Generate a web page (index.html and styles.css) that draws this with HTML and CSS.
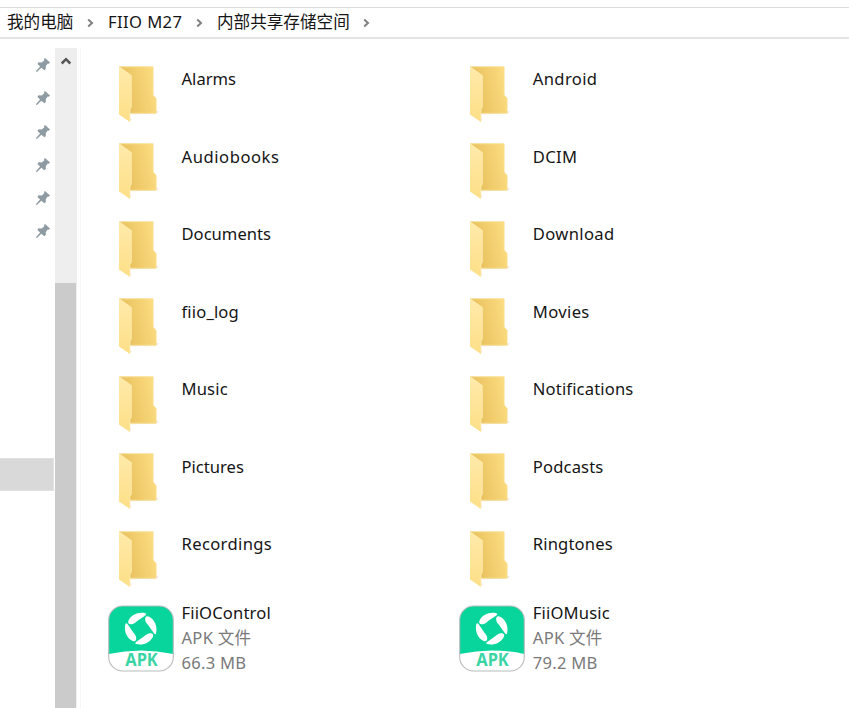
FILE: index.html
```
<!DOCTYPE html>
<html lang="zh-CN">
<head>
<meta charset="utf-8">
<title>内部共享存储空间</title>
<link rel="stylesheet" href="styles.css">
</head>
<body>
<svg class="defs" aria-hidden="true">
  <defs>
    <linearGradient id="back" x1="0.2" y1="0.7" x2="1" y2="0.5"><stop offset="0" stop-color="#e9c15e"/><stop offset="1" stop-color="#fbdc80"/></linearGradient>
    <linearGradient id="flap" x1="0" y1="0" x2="0" y2="1"><stop offset="0" stop-color="#ffeaaa"/><stop offset="1" stop-color="#fddf87"/></linearGradient>
    <symbol id="folder" viewBox="0 0 66 66">
      <path d="M20 54 49 53 51 51 48 50ZM20 61.5 24 59 22 57Z" fill="#ededed"/>
      <path d="M11 6H45.3V34.5L48.3 38V53H18Z" fill="url(#back)"/>
      <path d="M11.3 6.4H45V34.7L48 38V52.6H24" fill="none" stroke="#fae093" stroke-width=".7"/>
      <path d="M11 6 23.4 15V46.5L22 49V61.6L11 54Z" fill="url(#flap)"/>
      <path d="M11.5 6.5 23.3 15V46.5L22 49V61" fill="none" stroke="#ffefb9" stroke-width=".7"/>
    </symbol>
    <symbol id="pin" viewBox="0 0 14 14">
      <path d="M9 0 14 4.5 12.8 5.8 11.8 5.6 9.8 8 9.8 11 8.4 12.2 5.3 9.7 1.2 13.7 0 14 .3 12.7 4.1 8.5 1.4 6 2.6 4.3 5.7 4.4 8.4 2.2 8 1.1Z"/>
    </symbol>
    <symbol id="chevron" viewBox="0 0 8 10">
      <path d="M2.2 1.6 6 5 2.2 8.4" fill="none" stroke="#808080" stroke-width="2"/>
    </symbol>
    <symbol id="apk" viewBox="0 0 66 67">
      <rect x=".7" y="1" width="64.6" height="65" rx="14" fill="#fff"/>
      <path d="M.7 49V15A14 14 0 0 1 14.7 1H51.3A14 14 0 0 1 65.3 15V49Q33 42 .7 49Z" fill="#08d59b"/>
      <rect x=".7" y="1" width="64.6" height="65" rx="14" fill="none" stroke="#b9bdbb" stroke-width="1.1"/>
      <g transform="translate(32.7 23.7)" fill="#fff">
        <path id="blade" d="M4.5-15.4C-2.5-17-9-14-12-8.5C-13.5-5.5-11.5-4.2-9-4.5C-6.5-4.8-5-6.2-3.5-7.6L4.6-13.2Q6.4-14.8 4.5-15.4Z"/>
        <use href="#blade" transform="rotate(90)"/>
        <use href="#blade" transform="rotate(180)"/>
        <use href="#blade" transform="rotate(270)"/>
      </g>
      <text class="apk-label" x="33.5" y="61" text-anchor="middle" textLength="32.5" lengthAdjust="spacingAndGlyphs">APK</text>
    </symbol>
  </defs>
</svg>
<header class="address">
  <span class="crumb root">我的电脑</span><svg class="sep"><use href="#chevron"/></svg>
  <span class="crumb device">FIIO M27</span><svg class="sep"><use href="#chevron"/></svg>
  <span class="crumb storage">内部共享存储空间</span><svg class="sep"><use href="#chevron"/></svg>
</header>
<div class="body">
  <nav class="sidebar">
    <div class="pins">
      <svg class="pin"><use href="#pin"/></svg>
      <svg class="pin"><use href="#pin"/></svg>
      <svg class="pin"><use href="#pin"/></svg>
      <svg class="pin"><use href="#pin"/></svg>
      <svg class="pin"><use href="#pin"/></svg>
      <svg class="pin"><use href="#pin"/></svg>
    </div>
    <div class="selected"></div>
  </nav>
  <div class="scrollbar">
    <svg class="up" viewBox="0 0 12 10"><path d="M1.7 7.5 6 3.2 10.3 7.5" fill="none" stroke="#555" stroke-width="2.5"/></svg>
    <div class="thumb"></div>
  </div>
  <main class="files">
    <div class="item"><svg class="icon"><use href="#folder"/></svg><span class="name">Alarms</span></div>
    <div class="item"><svg class="icon"><use href="#folder"/></svg><span class="name wide">Android</span></div>
    <div class="item"><svg class="icon"><use href="#folder"/></svg><span class="name wider">Audiobooks</span></div>
    <div class="item"><svg class="icon"><use href="#folder"/></svg><span class="name wide">DCIM</span></div>
    <div class="item"><svg class="icon"><use href="#folder"/></svg><span class="name">Documents</span></div>
    <div class="item"><svg class="icon"><use href="#folder"/></svg><span class="name wide">Download</span></div>
    <div class="item"><svg class="icon"><use href="#folder"/></svg><span class="name slight">fiio_log</span></div>
    <div class="item"><svg class="icon"><use href="#folder"/></svg><span class="name wide">Movies</span></div>
    <div class="item"><svg class="icon"><use href="#folder"/></svg><span class="name slight">Music</span></div>
    <div class="item"><svg class="icon"><use href="#folder"/></svg><span class="name slight">Notifications</span></div>
    <div class="item"><svg class="icon"><use href="#folder"/></svg><span class="name">Pictures</span></div>
    <div class="item"><svg class="icon"><use href="#folder"/></svg><span class="name slight">Podcasts</span></div>
    <div class="item"><svg class="icon"><use href="#folder"/></svg><span class="name wide">Recordings</span></div>
    <div class="item"><svg class="icon"><use href="#folder"/></svg><span class="name slight">Ringtones</span></div>
    <div class="item app"><svg class="icon"><use href="#apk"/></svg><div class="details"><span class="slight">FiiOControl</span><span class="meta">APK 文件</span><span class="meta">66.3 MB</span></div></div>
    <div class="item app"><svg class="icon"><use href="#apk"/></svg><div class="details"><span class="slight">FiiOMusic</span><span class="meta">APK 文件</span><span class="meta">79.2 MB</span></div></div>
  </main>
</div>
</body>
</html>
```
FILE: styles.css
```
* { box-sizing: border-box; }
body {
  margin: 0;
  height: 708px;
  overflow: hidden;
  background: #fff;
  color: #151515;
  font: 16.6px/25px "Noto Sans", "Noto Sans CJK SC", sans-serif;
  display: flex;
  flex-direction: column;
}
.defs { position: absolute; width: 0; height: 0; }
.address {
  height: 32px;
  margin-top: 7px;
  padding: 0 0 2px 7px;
  border-top: 1px solid #dcdcdc;
  border-bottom: 2px solid #e4e4e4;
  display: flex;
  align-items: center;
  white-space: nowrap;
}
.crumb { flex: none; margin-top: -1px; }
.root { width: 79px; }
.device { width: 87px; letter-spacing: .4px; }
.storage { width: 145px; }
.sep { width: 8px; height: 10px; margin-top: 2px; }
.root + .sep { margin-right: 14px; }
.device + .sep { margin-right: 14px; }
.body { display: flex; flex: 1; padding-top: 9px; }
.sidebar { width: 55px; }
.pins { padding: 10px 0 0 36px; height: 410px; display: flex; flex-direction: column; gap: 19.3px; }
.pin { width: 14px; height: 14px; flex: none; fill: #8e9ba2; }
.selected { width: 54px; height: 33px; background: #d9d9d9; border: 1px solid #e1e1e1; border-left: 0; }
.scrollbar { width: 22px; background: #eee; display: flex; flex-direction: column; align-items: center; }
.up { width: 12px; height: 10px; margin: 8px 0 217px; flex: none; }
.thumb { width: 21px; flex: 1; background: #cbcbcb; align-self: flex-start; }
.files {
  flex: 1;
  margin-left: 3px;
  border-left: 1px solid #f5f5f5;
  padding: 11.6px 0 0 27px;
  display: grid;
  grid-template-columns: 351.3px 1fr;
  grid-auto-rows: 77.5px;
  align-content: start;
}
.item { display: flex; gap: 7.5px; align-items: flex-start; }
.icon { width: 66px; height: 67px; flex: none; }
.name { padding-top: 6.9px; }
.slight { letter-spacing: .15px; }
.wide { letter-spacing: .35px; }
.wider { letter-spacing: .55px; }
.app { padding-top: 2.9px; }
.details { display: flex; flex-direction: column; margin-top: -5px; }
.meta { color: #7a7a7a; letter-spacing: .25px; }
.apk-label { font: bold 17px "Noto Sans", sans-serif; fill: #3bd5a5; }
```
